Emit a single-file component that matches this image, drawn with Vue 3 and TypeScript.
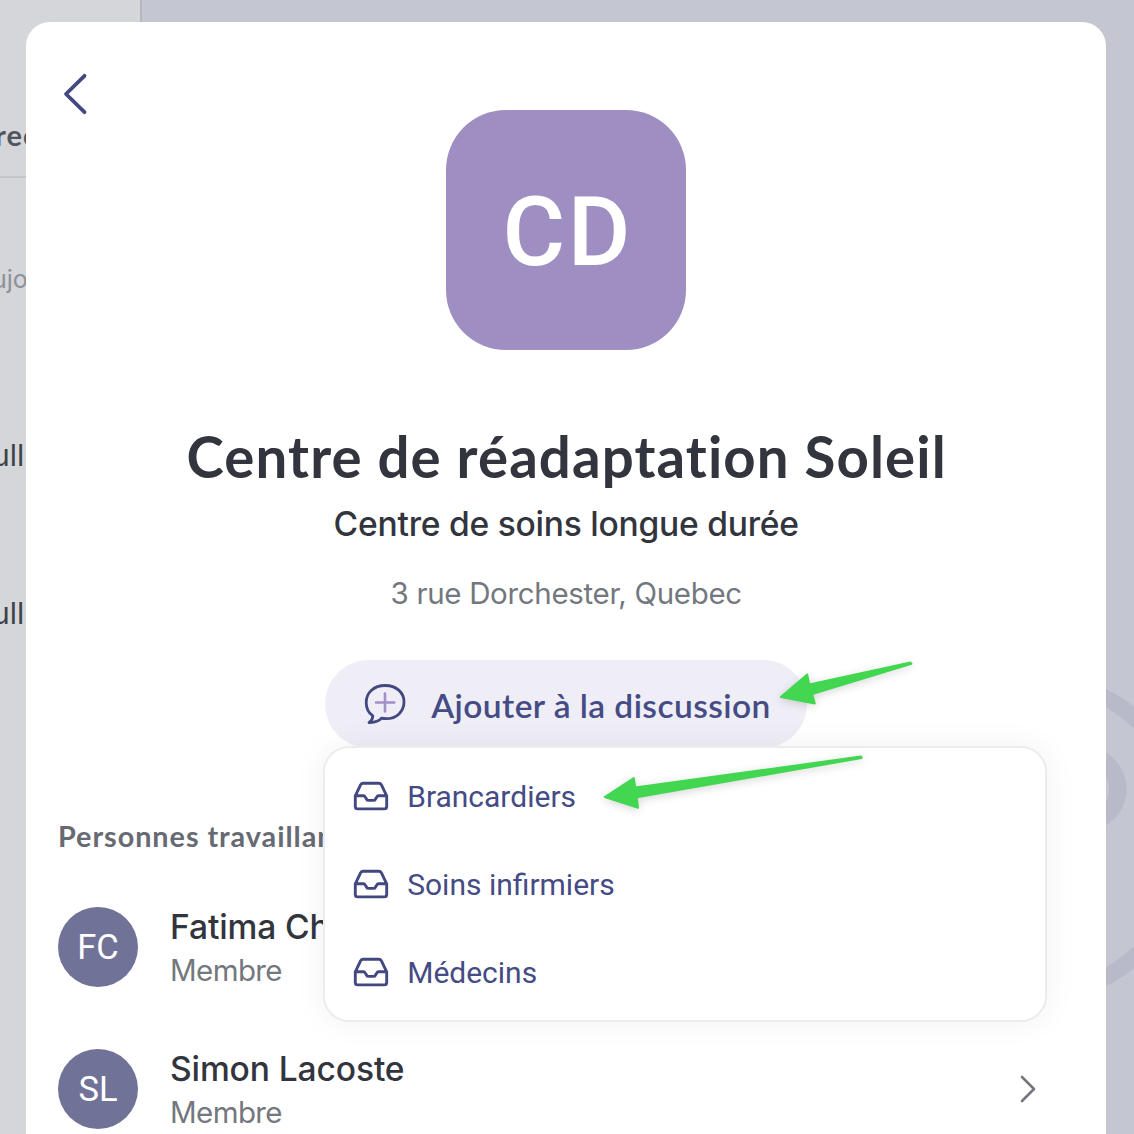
<script setup lang="ts">
interface Person { initials: string; name: string; role: string }

const groups: string[] = ['Brancardiers', 'Soins infirmiers', 'Médecins']
const people: Person[] = [
  { initials: 'FC', name: 'Fatima Charest', role: 'Membre' },
  { initials: 'SL', name: 'Simon Lacoste', role: 'Membre' },
]
</script>

<template>
  <div class="screen">
    <aside class="pane">
      <div class="pane-head">rec</div>
      <div class="pane-date">ujo</div>
      <div class="pane-item">ull</div>
      <div class="pane-item second">ull</div>
    </aside>
    <div class="backdrop">
      <svg class="rings" width="134" height="320" viewBox="1000 680 134 320" fill="none">
        <circle cx="1030" cy="837.5" r="158.8" stroke="#b8b9c9" stroke-width="16.6" />
        <circle cx="1084" cy="789" r="33.8" stroke="#b8b9c9" stroke-width="17.4" />
      </svg>
    </div>

    <main class="modal">
      <svg class="back" width="26" height="44" viewBox="0 0 26 44" fill="none">
        <path d="M22.5 3.8 4 22l18.5 18.2" stroke="#434880" stroke-width="3.8" stroke-linecap="round" stroke-linejoin="round" />
      </svg>
      <div class="logo">CD</div>
      <h1>Centre de réadaptation Soleil</h1>
      <h2>Centre de soins longue durée</h2>
      <p class="address">3 rue Dorchester, Quebec</p>

      <div class="action">
        <button class="add">
          <svg width="44" height="44" viewBox="0 0 44 44" fill="none" stroke-linecap="round" stroke-linejoin="round">
            <path d="M22.2 3.5c11 0 18.8 7 18.8 16.3 0 9.7-7.4 16.9-17.8 16.9-1.7 0-3.4-.2-4.7-.5-2.3 2.8-6.7 4.5-12.5 4.3 2.7-2 3.9-4.2 3.8-6.6C5.7 31 3.2 26.2 3.2 20.5 3.2 10.3 11 3.5 22.2 3.5Z" stroke="#434880" stroke-width="2.8" />
            <path d="M22 11.5v18M13 20.5h18.2" stroke="#a28fc6" stroke-width="2.6" />
          </svg>
          <span>Ajouter à la discussion</span>
        </button>
        <ul class="menu">
          <li v-for="g in groups" :key="g">
            <svg width="36" height="30" viewBox="0 0 36 30" fill="none" stroke="#434880" stroke-width="2.9" stroke-linejoin="round" stroke-linecap="round">
              <path d="M2.3 14.8 7.7 3.6Q8.5 2.2 10.1 2.2H25.9Q27.5 2.2 28.3 3.6L33.7 14.8V25.5Q33.7 27.9 31.3 27.9H4.7Q2.3 27.9 2.3 25.5ZM2.3 14.8H10.5Q11.600 14.800 12.200 15.900L13.800 18.600Q14.200 19.400 15.200 19.400H20.800Q21.800 19.400 22.200 18.600L23.800 15.900Q24.400 14.800 25.500 14.800H33.700" />
            </svg>
            <span>{{ g }}</span>
          </li>
        </ul>
      </div>

      <h3>Personnes travaillant</h3>
      <div class="people">
        <div v-for="p in people" :key="p.initials" class="person">
          <div class="avatar">{{ p.initials }}</div>
          <div class="info">
            <div class="name">{{ p.name }}</div>
            <div class="role">{{ p.role }}</div>
          </div>
          <svg class="chev" width="20" height="32" viewBox="0 0 20 32" fill="none">
            <path d="M4 4 16 16 4 28" stroke="#72767d" stroke-width="2.6" stroke-linecap="round" stroke-linejoin="round" />
          </svg>
        </div>
      </div>
    </main>

    <svg class="marks" width="1134" height="1134" viewBox="0 0 1134 1134" fill="#42d651" stroke="#42d651" stroke-width="2" stroke-linejoin="round">
      <path d="M780.8 697 807.2 674.5 809.3 684.6 910.5 662.5 911.5 663.8 812.2 694 814.8 703.5Z" />
      <path d="M604.8 797 633.8 778 635.2 787.6 861 756.6 861.6 758 636.8 797.3 638 807.7Z" />
    </svg>
  </div>
</template>

<style>
body { background: #c4c7d1; overflow: hidden; }
</style>

<style scoped>
* { box-sizing: border-box; }
.screen {
  position: relative;
  display: flex;
  width: 1134px;
  height: 1134px;
  overflow: hidden;
  background: #c4c7d1;
  font-family: Inter, "Liberation Sans", sans-serif;
  color: #32353d;
}
.pane {
  flex: none;
  width: 142px;
  height: 1134px;
  background: #d5d6da;
  border-right: 2px solid #b5b7bf;
  white-space: nowrap;
  overflow: hidden;
}
.pane-head {
  height: 178px;
  padding-top: 117px;
  border-bottom: 2px solid #c3c5ca;
  font: 700 29px/36px Lato, sans-serif;
  letter-spacing: 1px;
  text-indent: -5px;
  color: #50545d;
}
.pane-date { margin-top: 83px; font-size: 25px; line-height: 36px; text-indent: -8px; color: #8d9098; }
.pane-item { margin-top: 138px; font-size: 30px; line-height: 40px; text-indent: -8px; color: #3d4049; }
.pane-item.second { margin-top: 118px; }
.backdrop { flex: 1; display: flex; justify-content: flex-end; padding-top: 680px; }
.modal {
  position: absolute;
  left: 26px;
  top: 22px;
  width: 1080.4px;
  height: 1200px;
  padding: 88px 32px 0;
  background: #fff;
  border-radius: 24px;
  display: flex;
  flex-direction: column;
  align-items: center;
}
.back { position: absolute; left: 36px; top: 50px; }
.logo {
  flex: none;
  width: 240px;
  height: 240px;
  border-radius: 60px;
  background: #9f8ec2;
  color: #fff;
  display: flex;
  align-items: center;
  justify-content: center;
  padding: 3px 0 0 3px;
  font: 500 96px/120px Roboto, sans-serif;
  letter-spacing: 2.5px;
}
h1, h2, h3, p, ul { margin: 0; padding: 0; }
h1 {
  margin-top: 74px;
  font: 700 56.4px/64px Lato, sans-serif;
  letter-spacing: 1.1px;
  text-indent: 1px;
  font-variant-ligatures: none;
  white-space: nowrap;
}
h2 { margin-top: 14px; font-size: 33.6px; font-weight: 500; line-height: 44px; letter-spacing: -0.24px; white-space: nowrap; }
.address { margin-top: 27px; font-size: 29.5px; line-height: 40px; letter-spacing: -0.33px; color: #73777e; }
.action { position: relative; margin-top: 47px; width: 482px; height: 88px; }
.add {
  width: 482px;
  height: 88px;
  border: 0;
  border-radius: 44px;
  background: #efeef6;
  padding: 0 0 0 38px;
  display: flex;
  align-items: center;
  gap: 24px;
  color: #454b84;
  font: 600 33.5px/44px Lato, sans-serif;
  letter-spacing: 0.43px;
  white-space: nowrap;
}
.add span { padding-top: 1px; }
.menu {
  position: absolute;
  z-index: 2;
  left: -2px;
  top: 86px;
  width: 724px;
  padding: 4px 0;
  border: 2px solid #ececee;
  border-radius: 26px;
  background: #fff;
  box-shadow: 0 0 32px rgba(0, 0, 0, 0.06);
  list-style: none;
}
.menu li {
  height: 88px;
  display: flex;
  align-items: center;
  gap: 18px;
  padding-left: 28px;
  font: 400 30px/40px Roboto, sans-serif;
  color: #454b84;
}
.menu span { padding-top: 2px; }
h3 {
  align-self: flex-start;
  margin-top: 68px;
  font: 700 28.8px/40px Lato, sans-serif;
  letter-spacing: 0.95px;
  color: #666a72;
  white-space: nowrap;
}
.people { align-self: stretch; margin-top: 51px; display: flex; flex-direction: column; gap: 62px; }
.person { height: 80px; display: flex; align-items: center; }
.avatar {
  width: 80px;
  height: 80px;
  border-radius: 50%;
  background: #707397;
  color: #fff;
  display: flex;
  align-items: center;
  justify-content: center;
  font: 400 34.5px/44px Roboto, sans-serif;
}
.info { flex: 1; margin-left: 32px; padding-top: 3px; }
.name { font-size: 33.6px; font-weight: 500; line-height: 44px; letter-spacing: -0.12px; }
.role { font-size: 29.5px; line-height: 43px; letter-spacing: -0.6px; color: #73777e; }
.chev { margin-right: 36px; }
.marks { position: absolute; left: 0; top: 0; z-index: 5; filter: drop-shadow(0 2px 4px rgba(0, 0, 0, 0.16)); }
</style>
